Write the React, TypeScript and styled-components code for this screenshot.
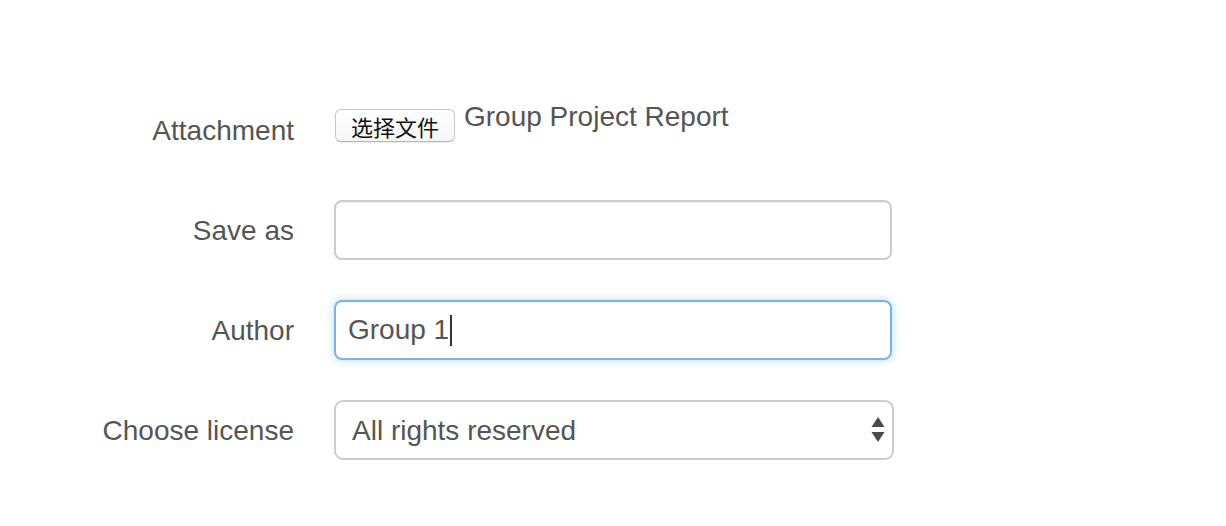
import React from "react";
import styled, { createGlobalStyle } from "styled-components";

const GlobalStyle = createGlobalStyle`
  html, body {
    margin: 0;
    padding: 0;
    background: #ffffff;
  }
  body {
    font-family: "Liberation Sans", Arial, "Noto Sans CJK SC", sans-serif;
    color: #555555;
  }
`;

const Form = styled.form`
  padding-top: 97px;
  display: flex;
  flex-direction: column;
  gap: 40px;
  width: 894px;
`;

const Row = styled.div<{ $first?: boolean }>`
  display: grid;
  grid-template-columns: 294px 1fr;
  column-gap: 40px;
  align-items: ${(p) => (p.$first ? "start" : "center")};
  min-height: ${(p) => (p.$first ? "63px" : "60px")};
`;

const Label = styled.label<{ $top?: number }>`
  text-align: right;
  font-size: 28px;
  line-height: 40px;
  color: #555555;
  padding-top: ${(p) => p.$top ?? 1}px;
  white-space: nowrap;
`;

const FileCell = styled.div`
  display: flex;
  align-items: flex-start;
  gap: 9px;
`;

const FileButton = styled.button`
  margin-top: 12px;
  margin-left: 1px;
  width: 120px;
  height: 33px;
  box-sizing: border-box;
  border: 1px solid #c8c8c8;
  border-bottom-color: #b8b8b8;
  border-radius: 6px;
  background: linear-gradient(#ffffff, #f6f6f6);
  box-shadow: 0 1px 1px rgba(0, 0, 0, 0.08);
  font-family: "Noto Sans CJK SC", sans-serif;
  font-size: 22px;
  line-height: 1;
  color: #111111;
  padding: 1px 0 0;
  display: flex;
  align-items: center;
  justify-content: center;
`;

const FileName = styled.span`
  font-size: 28px;
  line-height: 40px;
  color: #555555;
  white-space: nowrap;
`;

const TextInput = styled.input`
  box-sizing: border-box;
  width: 558px;
  height: 60px;
  padding: 0 12px;
  border: 2px solid #cccccc;
  border-radius: 8px;
  font-family: "Liberation Sans", Arial, sans-serif;
  font-size: 28px;
  color: #555555;
  background: #fff;
  outline: none;
  box-shadow: inset 0 1px 1px rgba(0, 0, 0, 0.06);
`;

const FocusedField = styled.div`
  box-sizing: border-box;
  width: 558px;
  height: 60px;
  padding: 0 12px;
  border: 2px solid #7db3ea;
  border-radius: 8px;
  font-size: 28px;
  color: #555555;
  background: #fff;
  display: flex;
  align-items: center;
  box-shadow: inset 0 1px 1px rgba(0, 0, 0, 0.05), 0 0 10px rgba(102, 175, 233, 0.45);
`;

const Caret = styled.span`
  display: inline-block;
  width: 2px;
  height: 31px;
  margin-left: 1px;
  background: #333333;
`;

const SelectWrap = styled.div`
  position: relative;
  width: 560px;
  height: 60px;
`;

const Select = styled.select`
  box-sizing: border-box;
  width: 100%;
  height: 60px;
  padding: 0 40px 0 16px;
  border: 2px solid #cccccc;
  border-radius: 9px;
  font-family: "Liberation Sans", Arial, sans-serif;
  font-size: 28px;
  color: #555555;
  background: #fff;
  appearance: none;
  -webkit-appearance: none;
  outline: none;
`;

const Arrows = styled.svg`
  position: absolute;
  right: 9px;
  top: 17px;
  pointer-events: none;
`;

export default function App() {
  return (
    <>
      <GlobalStyle />
      <Form onSubmit={(e) => e.preventDefault()}>
        <Row $first>
          <Label $top={14}>Attachment</Label>
          <FileCell>
            <FileButton type="button">选择文件</FileButton>
            <FileName>Group Project Report</FileName>
          </FileCell>
        </Row>
        <Row>
          <Label>Save as</Label>
          <TextInput type="text" />
        </Row>
        <Row>
          <Label>Author</Label>
          <FocusedField role="textbox">
            Group 1<Caret />
          </FocusedField>
        </Row>
        <Row>
          <Label>Choose license</Label>
          <SelectWrap>
            <Select defaultValue="all">
              <option value="all">All rights reserved</option>
              <option value="cc">Creative Commons</option>
              <option value="pd">Public domain</option>
            </Select>
            <Arrows width="14" height="26" viewBox="0 0 14 26">
              <polygon points="7,0 13.5,10 0.5,10" fill="#4a4a4a" />
              <polygon points="0.5,15 13.5,15 7,25" fill="#4a4a4a" />
            </Arrows>
          </SelectWrap>
        </Row>
      </Form>
    </>
  );
}
